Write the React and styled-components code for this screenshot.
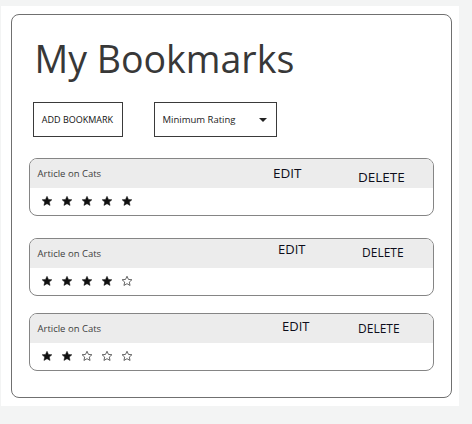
import React from "react";
import styled, { createGlobalStyle } from "styled-components";

const GlobalStyle = createGlobalStyle`
  body {
    margin: 0;
    background: #f3f4f4;
    font-family: "Open Sans", "Noto Sans", sans-serif;
  }
`;

const Canvas = styled.div`
  width: 458px;
  height: 400px;
  margin: 6px 0 0 1px;
  background: #ffffff;
  padding: 8px 0 0 10px;
  box-sizing: border-box;
`;

const Panel = styled.div`
  width: 441px;
  height: 384px;
  box-sizing: border-box;
  border: 1.5px solid #707070;
  border-radius: 8px;
  padding: 17px 0 0 16.5px;
`;

const Title = styled.h1`
  margin: 0 0 0 6px;
  font-size: 37.5px;
  font-weight: 400;
  color: #383838;
  line-height: 54px;
`;

const Toolbar = styled.div`
  display: flex;
  gap: 31px;
  margin: 16px 0 0 4px;
`;

const Button = styled.div`
  width: 90px;
  height: 35px;
  box-sizing: border-box;
  border: 1px solid #3a3a3a;
  display: flex;
  align-items: center;
  justify-content: center;
  font-size: 9px;
  color: #111;
`;

const Select = styled.div`
  width: 123px;
  height: 35px;
  box-sizing: border-box;
  border: 1px solid #3a3a3a;
  display: flex;
  align-items: center;
  justify-content: space-between;
  padding: 0 9px 0 8px;
  font-size: 9.5px;
  color: #222;
`;

const Caret = styled.span`
  width: 0;
  height: 0;
  border-left: 4px solid transparent;
  border-right: 4px solid transparent;
  border-top: 4px solid #222;
  margin-top: 1px;
`;

const List = styled.div`
  display: flex;
  flex-direction: column;
  margin-top: 21px;
`;

const Card = styled.div`
  width: 405px;
  height: 58px;
  box-sizing: border-box;
  border: 1.5px solid #858585;
  border-radius: 8px;
  overflow: hidden;
  margin-top: ${({ $top }) => $top}px;
  display: flex;
  flex-direction: column;
`;

const Header = styled.div`
  height: 28.5px;
  background: #ececec;
  display: grid;
  grid-template-columns: ${({ $edit, $del }) => `${$edit}px ${$del}px 1fr`};
  align-items: start;
  padding-left: 8px;
`;

const CardTitle = styled.span`
  align-self: center;
  font-size: 9.5px;
  color: #3d3d3d;
`;

const Action = styled.span`
  font-size: ${({ $size }) => $size}px;
  color: #0d0d1a;
  margin-top: ${({ $top }) => $top}px;
  line-height: normal;
`;

const Stars = styled.div`
  flex: 1;
  display: flex;
  align-items: center;
  gap: 8px;
  padding-left: 11.5px;
`;

const Star = ({ filled }) => (
  <svg width="12" height="12" viewBox="0 0 24 24">
    <path
      d="M12 2.5l2.9 6.3 6.9.7-5.2 4.6 1.5 6.8L12 17.4l-6.1 3.5 1.5-6.8-5.2-4.6 6.9-.7z"
      fill={filled ? "#111" : "none"}
      stroke={filled ? "#111" : "#555"}
      strokeWidth={filled ? 1 : 1.8}
      strokeLinejoin="round"
    />
  </svg>
);

const bookmarks = [
  { rating: 5, top: 0, edit: 235.5, del: 85, editTop: 4.7, delTop: 8.7, editSize: 13.5, delSize: 13.5 },
  { rating: 4, top: 22, edit: 240.5, del: 84, editTop: 0.7, delTop: 5.2, editSize: 13, delSize: 12 },
  { rating: 2, top: 17, edit: 244.5, del: 76, editTop: 2.5, delTop: 6.2, editSize: 13, delSize: 12 },
];

export default function App() {
  return (
    <>
      <GlobalStyle />
      <Canvas>
        <Panel>
          <Title>My Bookmarks</Title>
          <Toolbar>
            <Button>ADD BOOKMARK</Button>
            <Select>
              Minimum Rating
              <Caret />
            </Select>
          </Toolbar>
          <List>
            {bookmarks.map((b, i) => (
              <Card key={i} $top={b.top}>
                <Header $edit={b.edit} $del={b.del}>
                  <CardTitle>Article on Cats</CardTitle>
                  <Action $size={b.editSize} $top={b.editTop}>EDIT</Action>
                  <Action $size={b.delSize} $top={b.delTop}>DELETE</Action>
                </Header>
                <Stars>
                  {[0, 1, 2, 3, 4].map((s) => (
                    <Star key={s} filled={s < b.rating} />
                  ))}
                </Stars>
              </Card>
            ))}
          </List>
        </Panel>
      </Canvas>
    </>
  );
}
